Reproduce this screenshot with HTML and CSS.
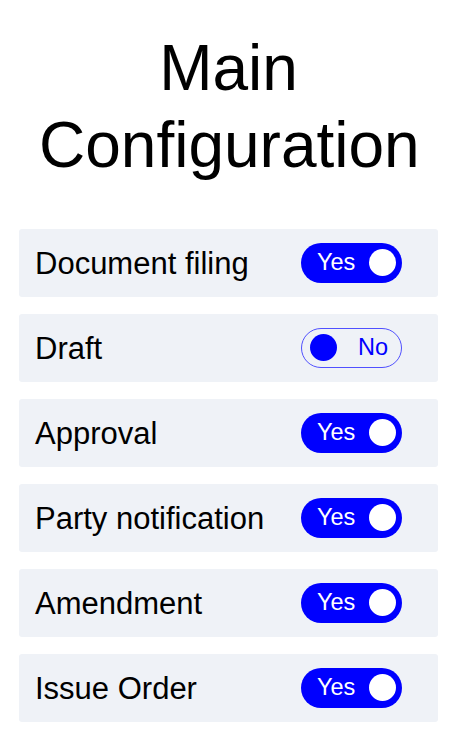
FILE: index.html
```html
<!DOCTYPE html>
<html lang="en">
<head>
<meta charset="utf-8">
<title>Main Configuration</title>
<link rel="stylesheet" href="styles.css">
</head>
<body>
<main class="page">
  <h1 class="title">Main Configuration</h1>
  <ul class="settings">
    <li class="row"><span class="label">Document filing</span><span class="toggle on"><span class="toggle-text">Yes</span><span class="knob"></span></span></li>
    <li class="row"><span class="label">Draft</span><span class="toggle off"><span class="knob"></span><span class="toggle-text">No</span></span></li>
    <li class="row"><span class="label">Approval</span><span class="toggle on"><span class="toggle-text">Yes</span><span class="knob"></span></span></li>
    <li class="row"><span class="label">Party notification</span><span class="toggle on"><span class="toggle-text">Yes</span><span class="knob"></span></span></li>
    <li class="row"><span class="label">Amendment</span><span class="toggle on"><span class="toggle-text">Yes</span><span class="knob"></span></span></li>
    <li class="row"><span class="label">Issue Order</span><span class="toggle on"><span class="toggle-text">Yes</span><span class="knob"></span></span></li>
  </ul>
</main>
</body>
</html>
```

FILE: styles.css
```css
html, body {
  margin: 0;
  padding: 0;
  background: #ffffff;
}

body {
  font-family: "Liberation Sans", Arial, sans-serif;
  color: #000000;
}

.page {
  padding: 30px 14px 0 19px;
}

.title {
  margin: 0 0 45px;
  font-size: 64px;
  font-weight: normal;
  line-height: 76.8px;
  text-align: center;
  padding: 0 20px;
}

.settings {
  list-style: none;
  margin: 0;
  padding: 0;
  display: flex;
  flex-direction: column;
  gap: 17px;
}

.row {
  height: 68px;
  box-sizing: border-box;
  background: #eff2f7;
  border-radius: 3px;
  display: flex;
  align-items: center;
  justify-content: space-between;
  padding: 0 36px 0 16px;
}

.label {
  font-size: 31px;
  padding-top: 3px;
}

.toggle {
  width: 101px;
  height: 40px;
  box-sizing: border-box;
  border-radius: 20px;
  display: flex;
  align-items: center;
  justify-content: space-between;
  font-size: 23.5px;
}

.toggle.on {
  background: #0000ff;
  color: #ffffff;
  padding: 0 6px 0 16px;
}

.toggle.on .knob {
  background: #ffffff;
}

.toggle.off {
  background: transparent;
  border: 1px solid #5050ff;
  color: #0000ff;
  padding: 0 13px 0 8px;
}

.toggle.off .knob {
  background: #0000ff;
}

.toggle-text {
  line-height: 1;
}

.knob {
  width: 27px;
  height: 27px;
  border-radius: 50%;
}
```
